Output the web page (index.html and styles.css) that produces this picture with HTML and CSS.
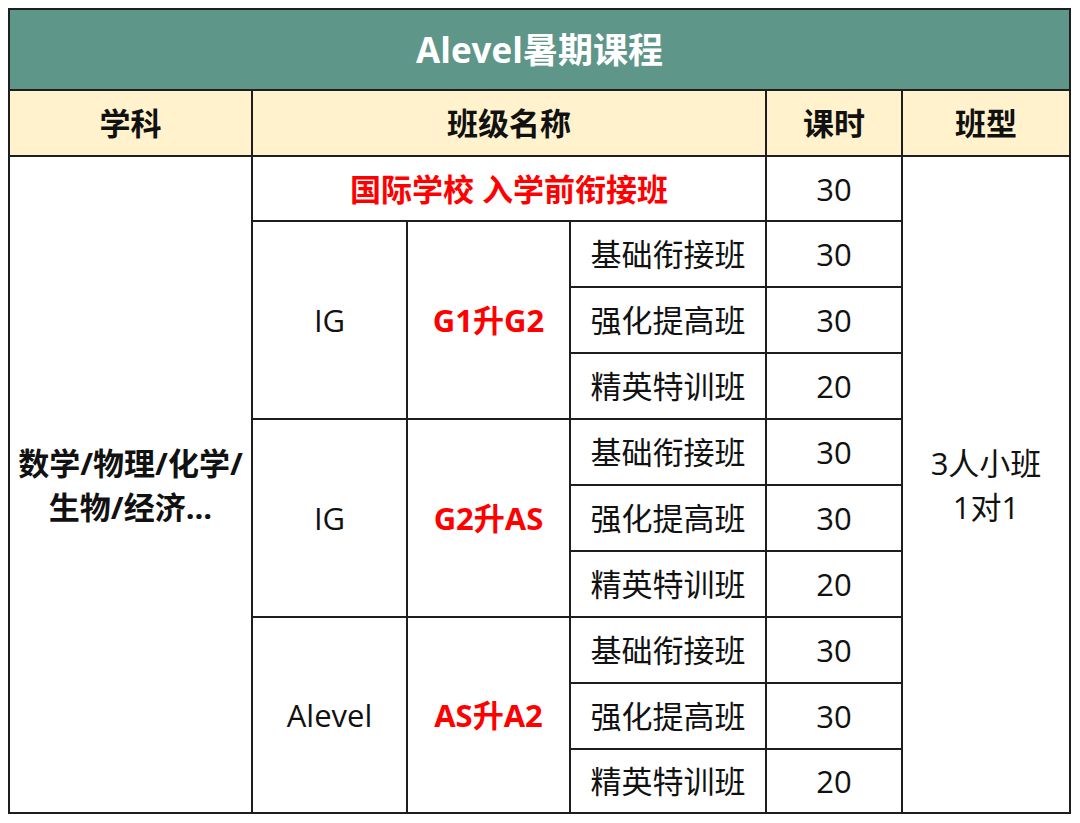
FILE: index.html
```html
<!DOCTYPE html>
<html lang="zh">
<head>
<meta charset="utf-8">
<link rel="stylesheet" href="styles.css">
</head>
<body>
<div class="grid">
  <div class="c title">Alevel暑期课程</div>
  <div class="c head h1">学科</div>
  <div class="c head h2">班级名称</div>
  <div class="c head h3">课时</div>
  <div class="c head h4">班型</div>

  <div class="c bold subj">数学/物理/化学/<br>生物/经济...</div>
  <div class="c red pre">国际学校 入学前衔接班</div>
  <div class="c hr r1">30</div>
  <div class="c type">3人小班<br>1对1</div>

  <div class="c lv g1">IG</div>
  <div class="c red gn g1">G1升G2</div>
  <div class="c nm r2">基础衔接班</div><div class="c hr r2">30</div>
  <div class="c nm r3">强化提高班</div><div class="c hr r3">30</div>
  <div class="c nm r4">精英特训班</div><div class="c hr r4">20</div>

  <div class="c lv g2">IG</div>
  <div class="c red gn g2">G2升AS</div>
  <div class="c nm r5">基础衔接班</div><div class="c hr r5">30</div>
  <div class="c nm r6">强化提高班</div><div class="c hr r6">30</div>
  <div class="c nm r7">精英特训班</div><div class="c hr r7">20</div>

  <div class="c lv g3">Alevel</div>
  <div class="c red gn g3">AS升A2</div>
  <div class="c nm r8">基础衔接班</div><div class="c hr r8">30</div>
  <div class="c nm r9">强化提高班</div><div class="c hr r9">30</div>
  <div class="c nm r10">精英特训班</div><div class="c hr r10">20</div>
</div>
</body>
</html>
```
FILE: styles.css
```css
html, body { margin: 0; padding: 0; background: #ffffff; }
body { padding: 8px 0 0 8px; }
.grid {
  display: grid;
  width: 1059px;
  background: #1e1e1e;
  padding: 2px;
  gap: 2px;
  grid-template-columns: 241px 153px 161px 194px 134px 166px;
  grid-template-rows: 79px 64px 63px 64px 64px 64px 64px 64px 64px 64px 64px 62px;
  font-family: "Open Sans", "Noto Sans CJK SC", sans-serif;
  color: #111;
}
.c {
  background: #ffffff;
  display: flex;
  align-items: center;
  justify-content: center;
  text-align: center;
  font-size: 31px;
  line-height: 44px;
}
.title {
  grid-column: 1 / 7;
  background: #5f968a;
  color: #ffffff;
  font-weight: 700;
  font-size: 35px;
}
.head { background: #fff2cc; font-weight: 700; font-size: 31px; }
.h1 { grid-column: 1; grid-row: 2; }
.h2 { grid-column: 2 / 5; grid-row: 2; }
.h3 { grid-column: 5; grid-row: 2; }
.h4 { grid-column: 6; grid-row: 2; }
.bold { font-weight: 700; }
.red { color: #ff0000; font-weight: 700; }
.subj { grid-column: 1; grid-row: 3 / 13; }
.pre { grid-column: 2 / 5; grid-row: 3; }
.type { grid-column: 6; grid-row: 3 / 13; }
.lv { grid-column: 2; }
.gn { grid-column: 3; }
.g1 { grid-row: 4 / 7; }
.g2 { grid-row: 7 / 10; }
.g3 { grid-row: 10 / 13; }
.nm { grid-column: 4; }
.hr { grid-column: 5; }
.r1 { grid-row: 3; }
.r2 { grid-row: 4; }
.r3 { grid-row: 5; }
.r4 { grid-row: 6; }
.r5 { grid-row: 7; }
.r6 { grid-row: 8; }
.r7 { grid-row: 9; }
.r8 { grid-row: 10; }
.r9 { grid-row: 11; }
.r10 { grid-row: 12; }
```
